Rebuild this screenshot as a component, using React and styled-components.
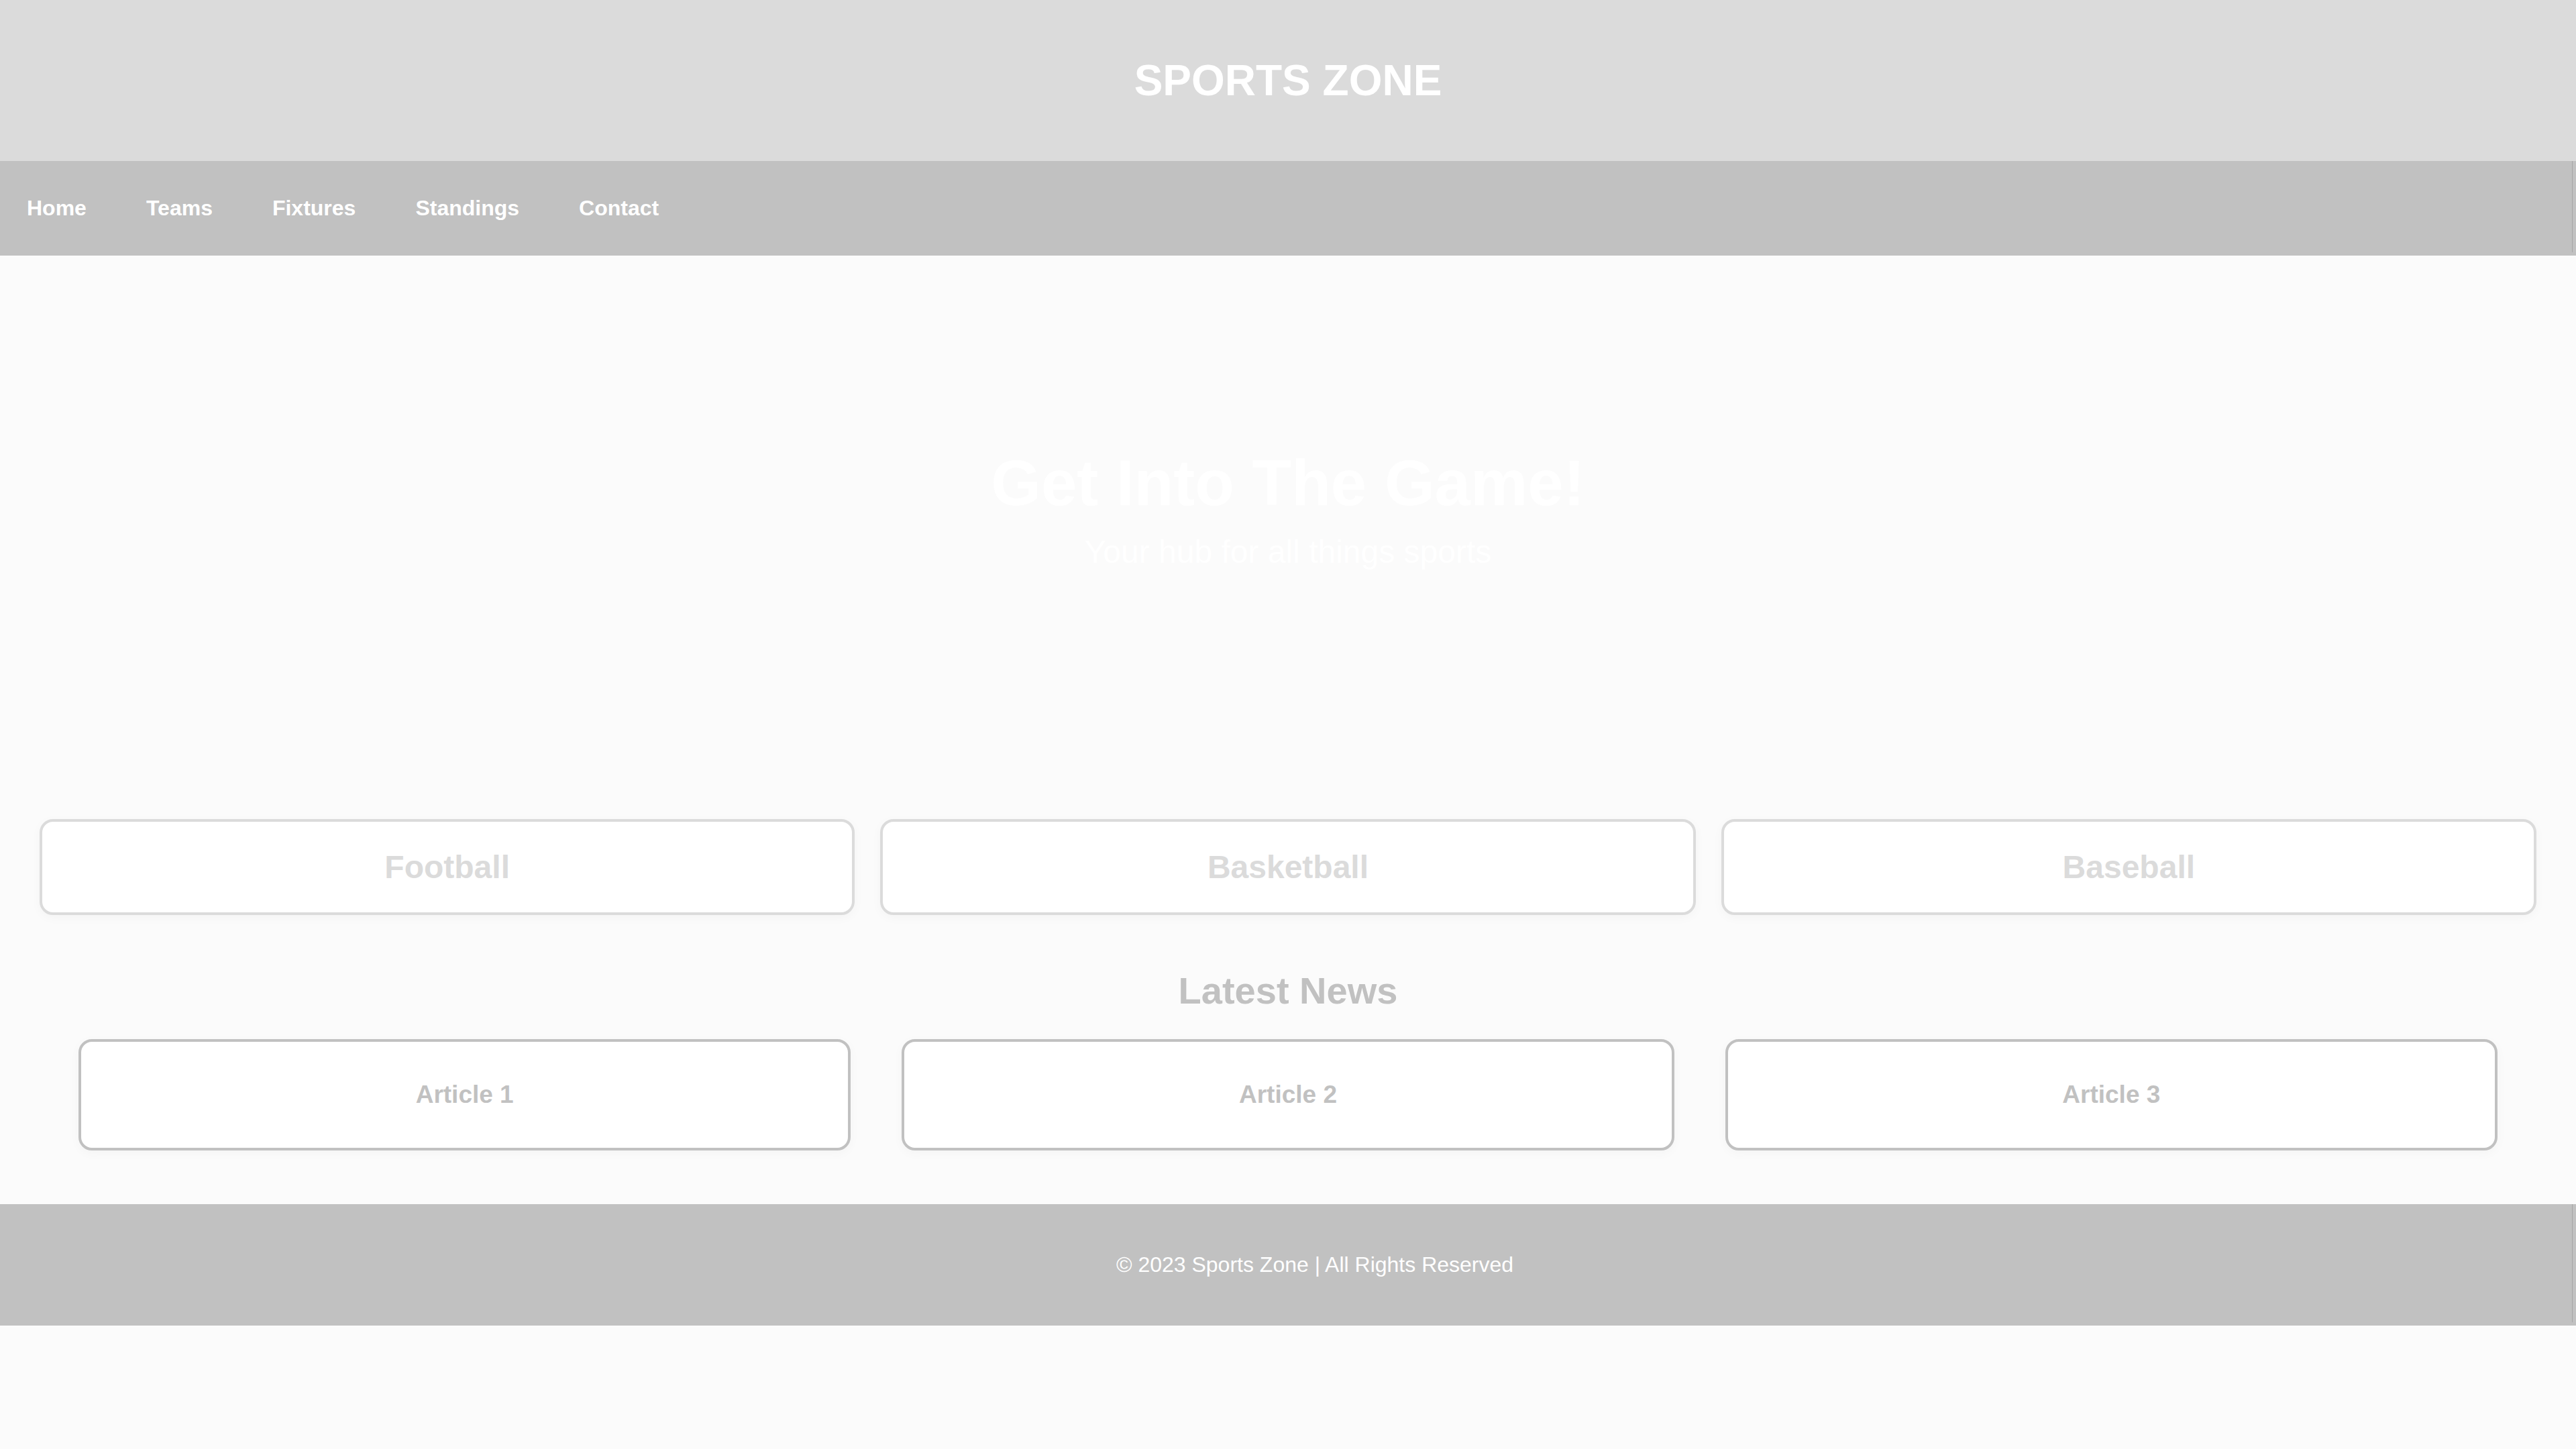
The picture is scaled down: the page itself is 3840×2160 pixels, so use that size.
import React from 'react';
import styled, { createGlobalStyle } from 'styled-components';

const GlobalStyle = createGlobalStyle`
  * { box-sizing: border-box; }
  body {
    margin: 0;
    background: #fbfbfb;
    font-family: Arial, "Liberation Sans", sans-serif;
    font-size: 32px;
  }
`;

const barBackground = `
  background: linear-gradient(#a6a6a6, #a6a6a6) right 5px top / 1px calc(100% - 5px) no-repeat #c1c1c1;
`;

const Header = styled.header`
  padding: 80px;
  background: #dbdbdb;
  color: #fff;
  text-align: center;
`;

const SiteTitle = styled.h1`
  margin: 0;
  font-size: 64px;
  line-height: 80px;
`;

const Nav = styled.nav`
  display: flex;
  gap: 9px;
  padding: 52px 0;
  ${barBackground}
`;

const NavLink = styled.a`
  padding: 0 40px;
  color: #fff;
  font-weight: bold;
  line-height: 37px;
  text-decoration: none;
`;

const Hero = styled.section`
  display: flex;
  flex-direction: column;
  align-items: center;
  justify-content: center;
  gap: 20px;
  min-height: 800px;
  padding-bottom: 48px;
  color: #fff;
  text-align: center;
`;

const HeroTitle = styled.h2`
  margin: 0;
  font-size: 96px;
  line-height: 110px;
`;

const HeroText = styled.p`
  margin: 0;
  font-size: 48px;
  line-height: 55px;
`;

const CardRow = styled.div`
  display: grid;
  grid-template-columns: repeat(3, 1fr);
  gap: ${(p) => p.$gap};
  padding: ${(p) => p.$padding};
`;

const Card = styled.article`
  padding: ${(p) => p.$padding};
  border: 4px solid ${(p) => p.$tone};
  border-radius: 20px;
  background: #fff;
  color: ${(p) => p.$tone};
  box-shadow: 0 4px 16px rgba(0, 0, 0, 0.03);
  text-align: center;
`;

const SportName = styled.h2`
  margin: 0;
  font-size: 48px;
  line-height: 55px;
`;

const NewsTitle = styled.h2`
  margin: 0;
  color: #c1c1c1;
  font-size: 56px;
  line-height: 65px;
  text-align: center;
`;

const ArticleName = styled.h3`
  margin: 0;
  font-size: 37px;
  line-height: 42px;
`;

const Footer = styled.footer`
  padding: 72px 0 72px 80px;
  ${barBackground}
  color: #fff;
  line-height: 37px;
  text-align: center;
`;

const links = ['Home', 'Teams', 'Fixtures', 'Standings', 'Contact'];
const sports = ['Football', 'Basketball', 'Baseball'];
const articles = ['Article 1', 'Article 2', 'Article 3'];

export default function App() {
  return (
    <>
      <GlobalStyle />
      <Header>
        <SiteTitle>SPORTS ZONE</SiteTitle>
      </Header>
      <Nav>
        {links.map((name) => (
          <NavLink key={name} href={`#${name.toLowerCase()}`}>{name}</NavLink>
        ))}
      </Nav>
      <main>
        <Hero>
          <HeroTitle>Get Into The Game!</HeroTitle>
          <HeroText>Your hub for all things sports</HeroText>
        </Hero>
        <CardRow $gap="38px" $padding="40px 59px 80px">
          {sports.map((name) => (
            <Card key={name} $tone="#dbdbdb" $padding="40px">
              <SportName>{name}</SportName>
            </Card>
          ))}
        </CardRow>
        <section>
          <NewsTitle>Latest News</NewsTitle>
          <CardRow $gap="76px" $padding="40px 117px 80px">
            {articles.map((name) => (
              <Card key={name} $tone="#c1c1c1" $padding="58px">
                <ArticleName>{name}</ArticleName>
              </Card>
            ))}
          </CardRow>
        </section>
      </main>
      <Footer>© 2023 Sports Zone | All Rights Reserved</Footer>
    </>
  );
}
